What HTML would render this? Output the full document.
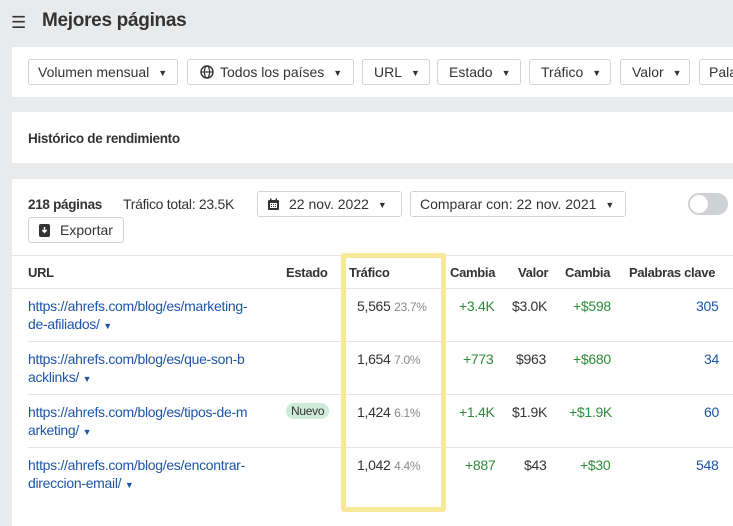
<!DOCTYPE html>
<html><head><meta charset="utf-8"><style>
*{margin:0;padding:0;box-sizing:border-box}
body{width:733px;height:526px;background:#e9eaec;font-family:"Liberation Sans",Arial,sans-serif;color:#333;position:relative;overflow:hidden;font-size:14px;letter-spacing:-0.3px}
.a{position:absolute;white-space:nowrap}
.panel{position:absolute;left:12px;right:0;background:#fff}
.btn{position:absolute;top:59px;height:26px;border:1px solid #cfd2d6;border-radius:3px;background:#fff;font-size:14px;line-height:24px;padding:0 9px;color:#333;white-space:nowrap;letter-spacing:0}
.tri{font-size:9px;margin-left:9px;vertical-align:1px}
.lnk{color:#1e55a8}
.g{color:#2e8b3a}
.line{position:absolute;left:28px;right:0;height:1px;background:#e4e5e8}
.h{font-weight:bold;font-size:13px;color:#333}
.pct{color:#8a8a8a;font-size:12px}
</style></head><body>
<div class="a" style="left:11px;top:13px;font-size:17px;">☰</div>
<div class="a" style="left:42px;top:10px;font-size:19px;font-weight:bold;color:#333">Mejores páginas</div>

<div class="panel" style="top:47px;height:50px"></div>
<div class="btn" style="left:28px;width:150px">Volumen mensual<span class="tri">▼</span></div>
<div class="btn" style="left:187px;width:167px;padding-left:12px"><svg width="14" height="14" viewBox="0 0 14 14" style="vertical-align:-2px;margin-right:6px"><circle cx="7" cy="7" r="6" fill="none" stroke="#333" stroke-width="1.4"/><ellipse cx="7" cy="7" rx="2.6" ry="6" fill="none" stroke="#333" stroke-width="1.2"/><line x1="1" y1="7" x2="13" y2="7" stroke="#333" stroke-width="1.2"/></svg>Todos los países<span class="tri">▼</span></div>
<div class="btn" style="left:362px;width:68px;padding-left:11px">URL<span class="tri">▼</span></div>
<div class="btn" style="left:437px;width:84px;padding-left:11px">Estado<span class="tri">▼</span></div>
<div class="btn" style="left:529px;width:82px;padding-left:11px">Tráfico<span class="tri">▼</span></div>
<div class="btn" style="left:620px;width:70px;padding-left:11px">Valor<span class="tri">▼</span></div>
<div class="btn" style="left:699px;width:60px">Pala</div>

<div class="panel" style="top:112px;height:51px"></div>
<div class="a h" style="left:28px;top:131px;font-size:13.5px">Histórico de rendimiento</div>

<div class="panel" style="top:179px;height:347px"></div>
<div class="a h" style="left:28px;top:197px;font-size:13.5px">218 páginas</div>
<div class="a" style="left:123px;top:196px">Tráfico total: 23.5K</div>
<div class="btn" style="left:257px;top:191px;width:145px;padding-left:9px"><svg width="13" height="13" viewBox="0 0 13 13" style="vertical-align:-2px;margin-right:9px"><rect x="1" y="2" width="11" height="10" rx="1" fill="#333"/><rect x="3" y="5" width="7" height="5" fill="#fff"/><rect x="3" y="0.5" width="1.5" height="3" fill="#333"/><rect x="8.5" y="0.5" width="1.5" height="3" fill="#333"/><path d="M4 6h1v1H4zM6 6h1v1H6zM8 6h1v1H8zM4 8h1v1H4zM6 8h1v1H6zM8 8h1v1H8z" fill="#333"/></svg>22 nov. 2022<span class="tri">▼</span></div>
<div class="btn" style="left:410px;top:191px;width:216px">Comparar con: 22 nov. 2021<span class="tri">▼</span></div>
<div class="a" style="left:688px;top:193px;width:40px;height:22px;border-radius:11px;background:#cfd1d4"><div style="position:absolute;left:2px;top:2px;width:18px;height:18px;border-radius:50%;background:#fff"></div></div>
<div class="btn" style="left:28px;top:217px;width:96px;padding-left:10px"><svg width="11" height="13" viewBox="0 0 11 13" style="vertical-align:-2px;margin-right:10px"><rect x="0" y="0" width="11" height="13" rx="2" fill="#333"/><path d="M5.5 3v5M3.3 6l2.2 2.3L7.7 6" stroke="#fff" stroke-width="1.5" fill="none"/></svg>Exportar</div>

<div class="line" style="left:12px;top:255px"></div>
<div class="a h" style="left:28px;top:265px">URL</div>
<div class="a h" style="left:286px;top:265px">Estado</div>
<div class="a h" style="left:349px;top:265px">Tráfico</div>
<div class="a h" style="left:450px;top:265px">Cambia</div>
<div class="a h" style="left:518px;top:265px">Valor</div>
<div class="a h" style="left:565px;top:265px">Cambia</div>
<div class="a h" style="left:629px;top:265px">Palabras clave</div>
<div class="line" style="left:12px;top:288px"></div>

<div class="a lnk" style="left:28px;top:297px;line-height:18px">https://ahrefs.com/blog/es/marketing-<br>de-afiliados/ <span style="font-size:9px">▼</span></div>
<div class="a" style="left:357px;top:298px">5,565 <span class="pct">23.7%</span></div>
<div class="a g" style="left:459px;top:298px">+3.4K</div>
<div class="a" style="left:512px;top:298px">$3.0K</div>
<div class="a g" style="left:573px;top:298px">+$598</div>
<div class="a lnk" style="left:696px;top:298px">305</div>
<div class="line" style="top:341px"></div>

<div class="a lnk" style="left:28px;top:350px;line-height:18px">https://ahrefs.com/blog/es/que-son-b<br>acklinks/ <span style="font-size:9px">▼</span></div>
<div class="a" style="left:357px;top:351px">1,654 <span class="pct">7.0%</span></div>
<div class="a g" style="left:463px;top:351px">+773</div>
<div class="a" style="left:516px;top:351px">$963</div>
<div class="a g" style="left:573px;top:351px">+$680</div>
<div class="a lnk" style="left:704px;top:351px">34</div>
<div class="line" style="top:394px"></div>

<div class="a lnk" style="left:28px;top:403px;line-height:18px">https://ahrefs.com/blog/es/tipos-de-m<br>arketing/ <span style="font-size:9px">▼</span></div>
<div class="a" style="left:286px;top:403px;background:#cdebd6;border-radius:8px;padding:1px 5px;font-size:12px;color:#333">Nuevo</div>
<div class="a" style="left:357px;top:404px">1,424 <span class="pct">6.1%</span></div>
<div class="a g" style="left:459px;top:404px">+1.4K</div>
<div class="a" style="left:512px;top:404px">$1.9K</div>
<div class="a g" style="left:569px;top:404px">+$1.9K</div>
<div class="a lnk" style="left:704px;top:404px">60</div>
<div class="line" style="top:447px"></div>

<div class="a lnk" style="left:28px;top:456px;line-height:18px">https://ahrefs.com/blog/es/encontrar-<br>direccion-email/ <span style="font-size:9px">▼</span></div>
<div class="a" style="left:357px;top:457px">1,042 <span class="pct">4.4%</span></div>
<div class="a g" style="left:465px;top:457px">+887</div>
<div class="a" style="left:524px;top:457px">$43</div>
<div class="a g" style="left:580px;top:457px">+$30</div>
<div class="a lnk" style="left:696px;top:457px">548</div>

<div class="a" style="left:341px;top:253px;width:105px;height:259px;border:5px solid #f8e89a;border-radius:3px"></div>
</body></html>
